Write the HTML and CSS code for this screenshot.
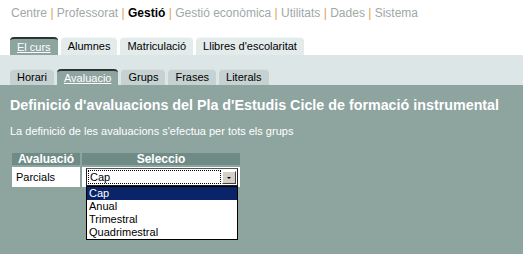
FILE: index.html
```html
<!DOCTYPE html>
<html lang="ca">
<head>
    <meta charset="UTF-8">
    <title>Gestió - Avaluacions</title>
    <link rel="stylesheet" href="styles.css">
</head>
<body>
    <div class="topnav"><a href="#">Centre</a> <span class="sep">|</span> <a href="#">Professorat</a> <span class="sep">|</span> <a href="#" class="current">Gestió</a> <span class="sep">|</span> <a href="#">Gestió econòmica</a> <span class="sep">|</span> <a href="#">Utilitats</a> <span class="sep">|</span> <a href="#">Dades</a> <span class="sep">|</span> <a href="#">Sistema</a></div>

    <ul class="tabs tabs-main">
        <li class="active"><a href="#">El curs</a></li>
        <li><a href="#">Alumnes</a></li>
        <li><a href="#">Matriculació</a></li>
        <li><a href="#">Llibres d'escolaritat</a></li>
    </ul>

    <div class="subband">
        <ul class="tabs tabs-sub">
            <li><a href="#">Horari</a></li>
            <li class="active"><a href="#">Avaluacio</a></li>
            <li><a href="#">Grups</a></li>
            <li><a href="#">Frases</a></li>
            <li><a href="#">Literals</a></li>
        </ul>
    </div>

    <div class="content">
        <h1 class="title">Definició d'avaluacions del Pla d'Estudis Cicle de formació instrumental</h1>
        <p class="note">La definició de les avaluacions s'efectua per tots els grups</p>

        <table class="grid">
            <tr>
                <th class="col-name">Avaluació</th>
                <th class="col-sel">Seleccio</th>
            </tr>
            <tr>
                <td>Parcials</td>
                <td>
                    <div class="combo">
                        <div class="combo-box">
                            <span class="combo-value">Cap</span>
                            <span class="combo-btn"></span>
                        </div>
                        <ul class="combo-list">
                            <li class="selected">Cap</li>
                            <li>Anual</li>
                            <li>Trimestral</li>
                            <li>Quadrimestral</li>
                        </ul>
                    </div>
                </td>
            </tr>
        </table>
    </div>
</body>
</html>
```

FILE: styles.css
```css
html, body {
    height: 100%;
}
body {
    margin: 0;
    font-family: 'Liberation Sans', Arial, sans-serif;
    background: #fff;
    display: flex;
    flex-direction: column;
}
.topnav {
    height: 27px;
    padding: 6px 0 0 11px;
    font-size: 12px;
    line-height: 15px;
    color: #a0a8a8;
    white-space: nowrap;
}
.topnav a {
    color: #a0a8a8;
    text-decoration: none;
}
.topnav a.current {
    color: #000;
    font-weight: bold;
}
.topnav .sep {
    color: #e0a050;
}
.tabs {
    list-style: none;
    margin: 0;
    padding: 0 0 0 10px;
    display: flex;
    gap: 3px;
}
.tabs li {
    border-radius: 4px 4px 0 0;
    font-size: 11px;
}
.tabs li a {
    display: block;
    padding: 0 7px;
    line-height: 17px;
    color: #000;
    text-decoration: none;
}
.tabs-main {
    height: 18px;
    margin-top: 4px;
}
.tabs-main li {
    background: #e3ebeb;
    border-top: 1px solid #f4f8f8;
}
.subband {
    background: #dde6e6;
    padding-top: 14px;
}
.tabs-sub {
    height: 16px;
}
.tabs-sub li {
    background: #c6d1d1;
    border-top: 1px solid #d8e0e0;
}
.tabs-sub li a {
    line-height: 15px;
}
.tabs .active {
    background: #8da49f;
    border-top: 2px solid #2c3333;
}
.tabs .active a {
    color: #fff;
    text-decoration: underline;
}
.tabs-main .active a {
    line-height: 16px;
}
.tabs-sub .active a {
    line-height: 14px;
}
.content {
    flex: 1;
    background: #8da49f;
    padding: 10px 10px 0 10px;
    color: #fff;
}
.title {
    margin: 0;
    font-size: 14.3px;
    line-height: 20px;
    font-weight: bold;
    white-space: nowrap;
}
.note {
    margin: 9px 0 0 0;
    font-size: 11px;
    line-height: 14px;
}
.grid {
    margin: 13px 0 0 2px;
    border-collapse: separate;
    border-spacing: 0 2px;
    font-size: 11px;
}
.grid th {
    background: #6f8b86;
    color: #fff;
    font-size: 12px;
    line-height: 12px;
    padding: 0;
    text-align: center;
}
.grid th.col-name {
    width: 68px;
}
.grid th.col-sel {
    width: 158px;
    border-left: 2px solid #8da49f;
}
.grid td {
    background: #fff;
    color: #000;
    height: 20px;
    padding: 0 0 0 4px;
    vertical-align: middle;
}
.grid td + td {
    border-left: 2px solid #8da49f;
    padding: 0;
}
.combo {
    position: relative;
    margin-left: 4px;
    width: 152px;
}
.combo-box {
    height: 16px;
    border: 1px solid #222;
    border-top-color: #555;
    display: flex;
    align-items: center;
    background: #fff;
}
.combo-value {
    flex: 1;
    margin: 1px;
    height: 12px;
    line-height: 12px;
    border: 1px dotted #000;
    padding-left: 1px;
    font-size: 11px;
}
.combo-btn {
    width: 14px;
    height: 13px;
    margin-right: 1px;
    background: #d4d0c8;
    border: 1px solid;
    border-color: #fff #404040 #404040 #fff;
    box-sizing: border-box;
    position: relative;
}
.combo-btn::after {
    content: "";
    position: absolute;
    left: 4px;
    top: 5px;
    border-left: 2px solid transparent;
    border-right: 2px solid transparent;
    border-top: 2px solid #000;
}
.combo-list {
    position: absolute;
    left: 0;
    top: 18px;
    width: 150px;
    margin: 0;
    padding: 0;
    list-style: none;
    background: #fff;
    border: 1px solid #000;
    font-size: 11px;
    z-index: 2;
}
.combo-list li {
    height: 13px;
    line-height: 13px;
    padding-left: 2px;
    color: #000;
}
.combo-list li.selected {
    background: #0a246a;
    color: #fff;
}
```
